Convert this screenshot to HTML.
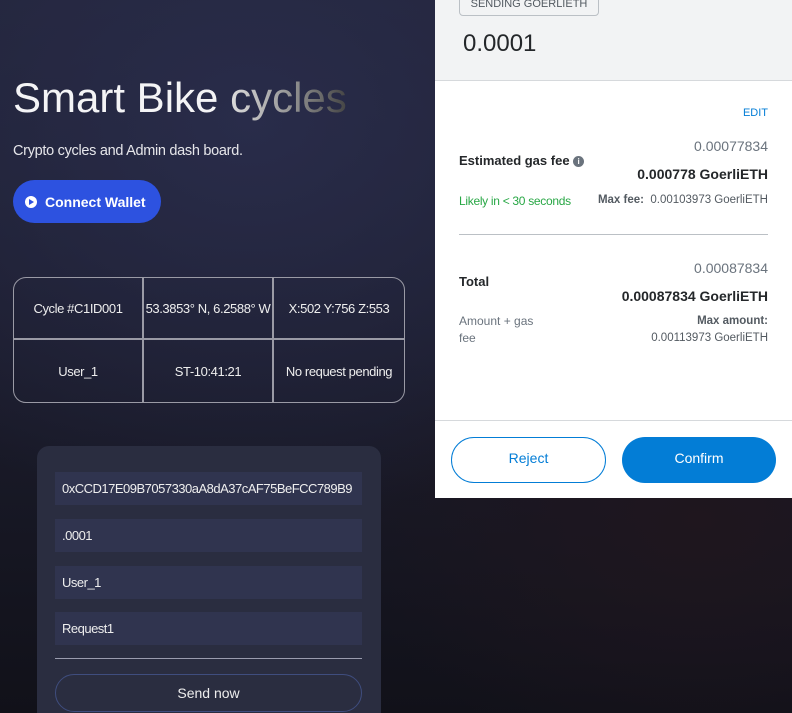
<!DOCTYPE html>
<html style="overflow:hidden;width:792px;height:713px"><head><style>
*{margin:0;padding:0;box-sizing:border-box}
body{width:792px;height:713px;overflow:hidden;position:relative;font-family:"Liberation Sans",sans-serif;
background:radial-gradient(ellipse 500px 400px at 250px 120px,#292c4a 0%,rgba(30,31,50,0) 100%),radial-gradient(ellipse 350px 250px at 700px 520px,#1f161e 0%,rgba(20,18,28,0) 100%),linear-gradient(180deg,#222439 0%,#1b1c2c 50%,#111119 100%);}
.abs{position:absolute}
h1{position:absolute;left:13px;top:74px;font-size:42px;font-weight:normal;color:#f4f4f6;letter-spacing:0;white-space:nowrap}
h1 span{background:linear-gradient(90deg,#ddd 0%,#888 60%,#444 100%);-webkit-background-clip:text;color:transparent}
.sub{left:13px;top:143px;font-size:14.5px;color:#e6e6ea;letter-spacing:-0.3px}
.btn{left:13px;top:180px;width:148px;height:43px;border-radius:22px;background:#2d52e0;color:#fff;font-weight:bold;font-size:14px;display:flex;align-items:center;padding-left:12px}
.btn i{width:12px;height:12px;border-radius:50%;background:#fff;margin-right:8px;position:relative}
.btn i:after{content:"";position:absolute;left:4px;top:3px;border-left:5px solid #2d52e0;border-top:3px solid transparent;border-bottom:3px solid transparent}
table{position:absolute;left:13px;top:277px;width:392px;height:126px;border-collapse:separate;border-spacing:0;border:1px solid #9a9aa5;border-radius:13px;color:#eee;font-size:13px;table-layout:fixed}
td{height:62px;text-align:center;border-right:2px solid #9a9aa5;border-bottom:2px solid #9a9aa5;white-space:nowrap;overflow:hidden;letter-spacing:-0.4px}
tr td:last-child{border-right:none}tr:last-child td{border-bottom:none}
.card{left:37px;top:446px;width:344px;height:267px;border-radius:12px 12px 0 0;background:#2a2d40}
.in{position:absolute;left:18px;width:307px;height:33px;background:#30344f;color:#eee;font-size:13px;line-height:33px;padding-left:7px;white-space:nowrap;overflow:hidden;letter-spacing:-0.5px}
.mm{left:435px;top:0;width:357px;height:498px;background:#fff;color:#24272a}
.gray{position:absolute;left:0;top:0;width:357px;height:81px;background:#f2f3f4;border-bottom:1px solid #d6d9dc}
.r{position:absolute;right:24px;text-align:right;white-space:nowrap}
</style></head><body>
<h1>Smart Bike <span>cycles</span></h1>
<div class="abs sub">Crypto cycles and Admin dash board.</div>
<div class="abs btn"><i></i>Connect Wallet</div>
<table><tr><td>Cycle #C1ID001</td><td>53.3853° N, 6.2588° W</td><td>X:502 Y:756 Z:553</td></tr>
<tr><td>User_1</td><td>ST-10:41:21</td><td>No request pending</td></tr></table>
<div class="abs card">
<div class="in" style="top:26px">0xCCD17E09B7057330aA8dA37cAF75BeFCC789B9</div>
<div class="in" style="top:73px">.0001</div>
<div class="in" style="top:120px">User_1</div>
<div class="in" style="top:166px">Request1</div>
<div class="abs" style="left:18px;top:212px;width:307px;height:1px;background:#9a9cae"></div>
<div class="abs" style="left:18px;top:228px;width:307px;height:38px;border:1px solid #3f4d7e;border-radius:19px;color:#eee;font-size:14px;text-align:center;line-height:36px">Send now</div>
</div>
<div class="abs mm">
<div class="gray">
<div class="abs" style="left:24px;top:-6px;width:140px;height:22px;border:1px solid #bbc0c5;border-radius:4px;font-size:11px;color:#535a61;text-align:center;line-height:18px">SENDING GOERLIETH</div>
<div class="abs" style="left:28px;top:30px;font-size:24px;color:#24272a">0.0001</div>
</div>
<div class="r" style="top:107px;font-size:11px;color:#037dd6">EDIT</div>
<div class="r" style="top:138px;font-size:14px;color:#6a737d">0.00077834</div>
<div class="abs" style="left:24px;top:153px;font-size:13px;font-weight:bold">Estimated gas fee <span style="display:inline-block;width:11px;height:11px;border-radius:50%;background:#6a737d;color:#fff;font-size:8px;text-align:center;line-height:11px;vertical-align:1px">i</span></div>
<div class="r" style="top:166px;font-size:14px;font-weight:bold">0.000778 GoerliETH</div>
<div class="abs" style="left:24px;top:194px;font-size:12px;color:#28a745;white-space:nowrap;letter-spacing:-0.3px">Likely in &lt; 30 seconds</div>
<div class="r" style="top:194px;font-size:11.5px;color:#535a61"><b>Max fee:</b>&nbsp; 0.00103973 GoerliETH</div>
<div class="abs" style="left:24px;top:234px;width:309px;height:1px;background:#bbc0c5"></div>
<div class="r" style="top:260px;font-size:14px;color:#6a737d">0.00087834</div>
<div class="abs" style="left:24px;top:274px;font-size:13px;font-weight:bold">Total</div>
<div class="r" style="top:288px;font-size:14px;font-weight:bold">0.00087834 GoerliETH</div>
<div class="abs" style="left:24px;top:313px;font-size:12px;color:#6a737d;line-height:17px">Amount + gas<br>fee</div>
<div class="r" style="top:313px;font-size:11.5px;color:#535a61;line-height:17px"><b>Max amount:</b><br>0.00113973 GoerliETH</div>
<div class="abs" style="left:0;top:420px;width:357px;height:1px;background:#d6d9dc"></div>
<div class="abs" style="left:16px;top:437px;width:155px;height:46px;border:1px solid #037dd6;border-radius:23px;color:#037dd6;font-size:14px;text-align:center;line-height:40px">Reject</div>
<div class="abs" style="left:187px;top:437px;width:154px;height:46px;background:#037dd6;border-radius:23px;color:#fff;font-size:14px;text-align:center;line-height:42px">Confirm</div>
</div>
</body></html>
